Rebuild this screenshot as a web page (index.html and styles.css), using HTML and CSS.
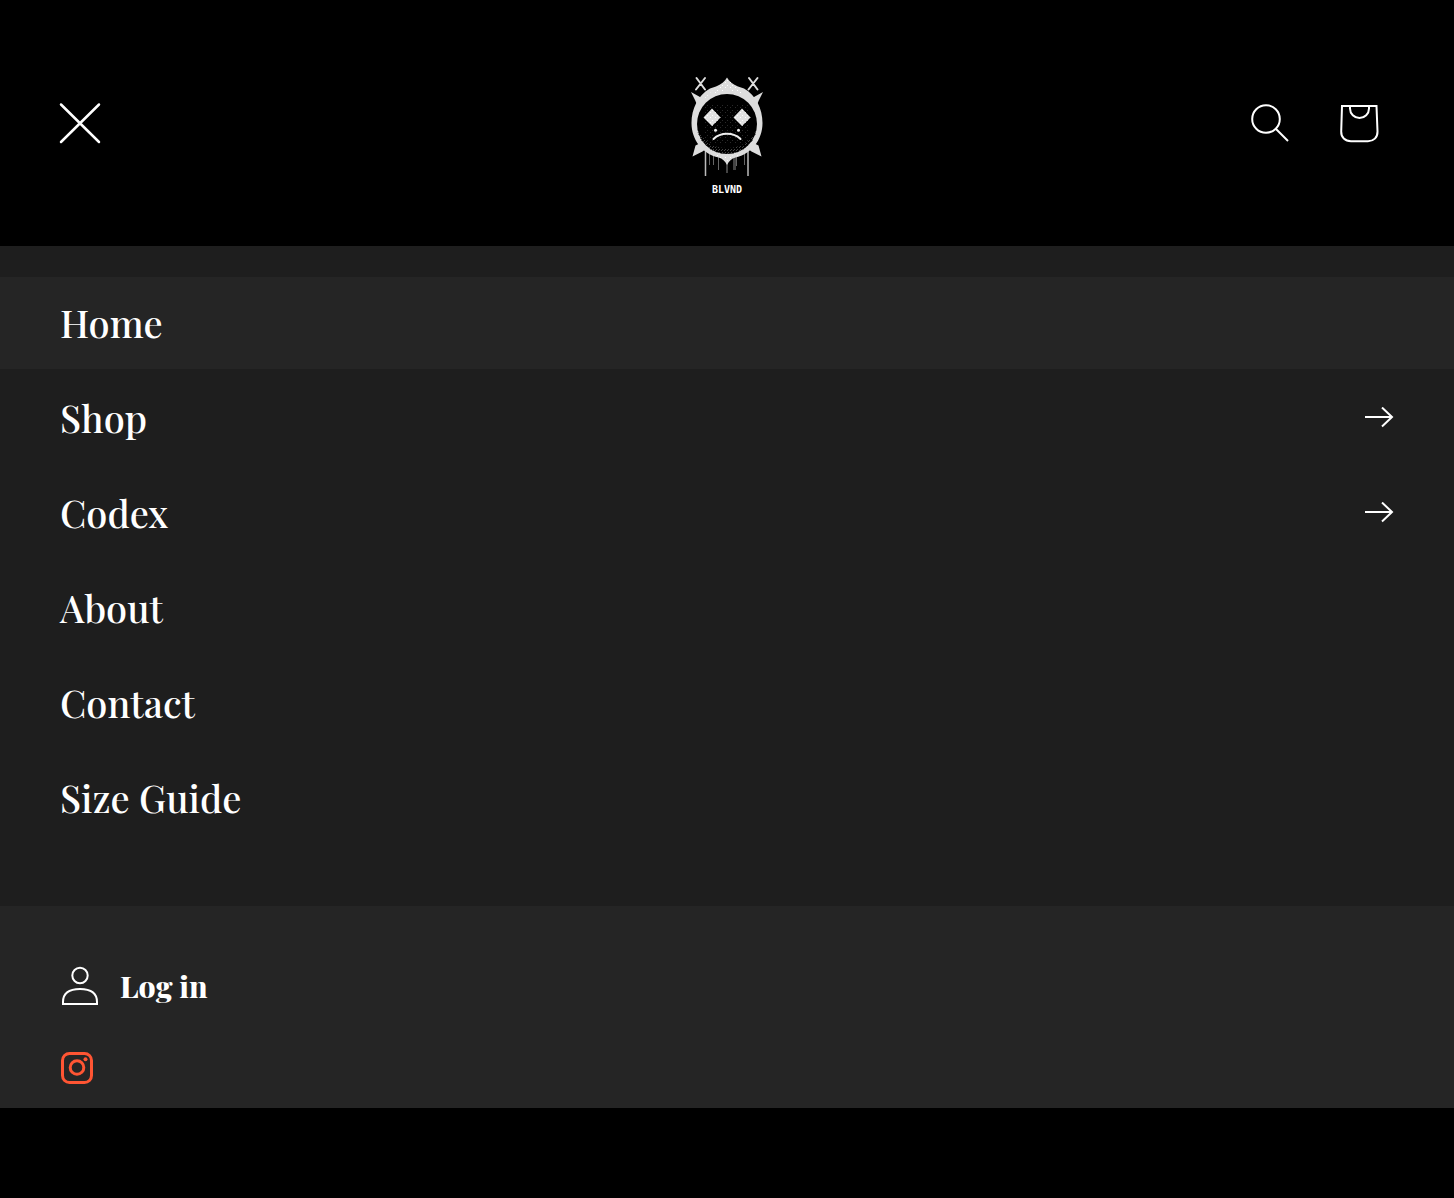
FILE: index.html
```
<!DOCTYPE html>
<html lang="en">
<head>
    <meta charset="UTF-8">
    <meta name="viewport" content="width=device-width, initial-scale=1.0">
    <title>BLVND</title>
    <link rel="stylesheet" href="styles.css">
</head>
<body>
    <header class="header">
        <button type="button" class="icon-button menu-toggle" aria-label="Close menu">
            <svg class="icon" width="44" height="44" viewBox="0 0 44 44"><path stroke-width="2.500" stroke-linecap="round" d="M3 3.500 41 41M41 3.500 3 41"/></svg>
        </button>

        <a href="#" class="logo" aria-label="BLVND home">
            <svg width="100" height="164" viewBox="0 -24 100 164">
                <defs>
                    <pattern id="dots" width="5" height="5" patternUnits="userSpaceOnUse">
                        <path fill="#fff" d="M0 0h1v1H0zM3 2h1v1H3z"/>
                    </pattern>
                    <pattern id="grain" width="3" height="3" patternUnits="userSpaceOnUse">
                        <path fill="#444" d="M0 0h1v1H0zM2 1h1v1H2z"/>
                    </pattern>
                    <pattern id="specks" width="5" height="5" patternUnits="userSpaceOnUse">
                        <path fill="#2a2a2a" d="M0 0h1v1H0zM3 2h1v1H3z"/>
                    </pattern>
                </defs>
                <!-- drips -->
                <path stroke="#bbb" stroke-width="1.500" d="M28.500 84v27M71 84v27"/>
                <path stroke="#666" d="M32.500 86v14M36.500 88v12M41.500 90v15M59.500 90v11M67.500 87v13"/>
                <path stroke="#888" d="M50 96v12"/>
                <path stroke="#444" stroke-width="3" d="M57.500 91v14"/>
                <!-- spikes -->
                <path fill="#ddd" d="M14 27l9 5 4 4-6 6-3-7zM86 27l-9 5-4 4 6 6 3-7zM15.500 91.500l3-11 6-3 5 6-4 3zM84.500 91.500l-3-11-6-3-5 6 4 3z"/>
                <!-- ring -->
                <path fill="#ddd" d="M50 12.500c2 4 6 7 11 9l6 2C79 30 85.500 44 85.500 58c0 17-11 31-27 34.500-4 1-6.500 3.500-8.500 7.500-2-4-4.500-6.500-8.500-7.500-16-3.500-27-17.500-27-34.500 0-14 6.500-28 18.500-34.500l6-2c5-2 9-5 11-9z"/>
                <path fill="url(#dots)" d="M50 14 40 22 24 36l10-7 16-4 16 4 10 7-16-14zM34 88l16 8 16-8-16 4z"/>
                <circle cx="50" cy="59" r="30"/>
                <path fill="url(#grain)" d="M20 64c2 14 14 25 30 25s28-11 30-25c-8 13-15 19-30 19S28 77 20 64z"/>
                <path fill="url(#specks)" d="M28 38h44v40H28z"/>
                <!-- face -->
                <path fill="#e2e2e2" d="m35 43.500 8.500 9L35 61l-8.500-8.500zM65 43.500l8.500 9L65 61l-8.500-8.500z"/>
                <path fill="url(#dots)" d="m35 43.500 8.500 9L35 61l-8.500-8.500zM65 43.500l8.500 9L65 61l-8.500-8.500z"/>
                <g fill="#eee"><circle cx="38.500" cy="65.300" r="1.500"/><circle cx="61.500" cy="65.300" r="1.500"/></g>
                <path fill="none" stroke="#eee" stroke-width="2" stroke-linecap="round" d="M36.500 74c7-7 20-7 27 0"/>
                <!-- crosses -->
                <path stroke="#ddd" stroke-width="2" stroke-linecap="round" d="m19.500 13 8.500 11.500M28 13l-9 11.500M72 13l8.500 11.500M80.500 13l-9 11.500"/>
                <text class="logo-name" x="50" y="128" text-anchor="middle">BLVND</text>
            </svg>
        </a>

        <div class="header-icons">
            <button type="button" class="icon-button" aria-label="Search">
                <svg class="icon" width="44" height="44" viewBox="0 0 44 44"><circle cx="16" cy="18" r="13.800"/><path d="m26 28 12 12"/></svg>
            </button>
            <a href="#" class="icon-button" aria-label="Cart">
                <svg class="icon" width="44" height="44" viewBox="0 0 44 44"><path d="M4 5h34.500l1 25.500c.2 6-4 9.700-9.500 9.700H13c-6 0-10-4-9.800-9.700zM12 5v2.500a9.500 9.500 0 0 0 19 0V5"/></svg>
            </a>
        </div>
    </header>

    <div class="drawer">
        <nav class="menu">
            <ul class="menu-list">
                <li><a href="#" class="menu-item active">Home</a></li>
                <li>
                    <a href="#" class="menu-item">Shop
                        <svg class="icon" width="30" height="22" viewBox="0 0 30 22"><path d="M1 10h27M18 .5l10 9.500-10 9.500"/></svg>
                    </a>
                </li>
                <li>
                    <a href="#" class="menu-item">Codex
                        <svg class="icon" width="30" height="22" viewBox="0 0 30 22"><path d="M1 10h27M18 .5l10 9.500-10 9.500"/></svg>
                    </a>
                </li>
                <li><a href="#" class="menu-item">About</a></li>
                <li><a href="#" class="menu-item">Contact</a></li>
                <li><a href="#" class="menu-item">Size Guide</a></li>
            </ul>
        </nav>

        <div class="utility">
            <a href="#" class="login">
                <svg class="icon" width="40" height="40" viewBox="0 0 40 40"><circle cx="20" cy="9.500" r="7.700"/><path d="M3 38v-2c0-8 5-13 17-13s17 5 17 13v2z"/></svg>
                Log in
            </a>
            <a href="#" class="social" aria-label="Instagram">
                <svg class="icon" width="34" height="34" viewBox="0 0 34 34"><rect x="2.500" y="2.500" width="29" height="29" rx="7"/><circle cx="17" cy="16.500" r="6.800"/><circle class="dot" cx="25.500" cy="8.300" r="2"/></svg>
            </a>
        </div>
    </div>
</body>
</html>
```
FILE: styles.css
```
body {
    margin: 0;
    background-color: #000;
    color: #fff;
    font-family: "Playfair Display", "Liberation Serif", serif;
}
a {
    color: inherit;
    text-decoration: none;
}
svg {
    display: block;
}
.icon {
    flex: none;
    fill: none;
    stroke: currentColor;
    stroke-width: 2;
}
.header {
    display: grid;
    grid-template-columns: 1fr auto 1fr;
    align-items: center;
    padding: 41px 50px;
}
.icon-button {
    display: flex;
    align-items: center;
    justify-content: center;
    width: 88px;
    height: 88px;
    padding: 0;
    border: none;
    background: none;
    color: #fff;
    cursor: pointer;
}
.menu-toggle {
    width: 60px;
}
.header-icons {
    display: flex;
    justify-content: flex-end;
}
.logo-name {
    fill: #fff;
    font: bold 10px "DejaVu Sans Mono", monospace;
}
.drawer {
    background-color: #1e1e1e;
}
.menu {
    padding: 31px 0 62px;
}
.menu-list {
    display: flex;
    flex-direction: column;
    gap: 3px;
    margin: 0;
    padding: 0;
    list-style: none;
}
.menu-item {
    display: flex;
    align-items: center;
    justify-content: space-between;
    padding: 22px 60px;
    font-size: 38px;
    font-weight: 500;
    line-height: 48px;
}
.menu-item.active,
.menu-item:hover {
    background-color: #252525;
}
.utility {
    display: flex;
    flex-direction: column;
    align-items: flex-start;
    gap: 45px;
    padding: 60px 60px 23px;
    background-color: #252525;
}
.login {
    display: flex;
    align-items: center;
    gap: 20px;
    font-size: 30px;
    font-weight: 800;
    line-height: 40px;
}
.social {
    color: #ff5533;
}
.social .icon {
    stroke-width: 3;
}
.social .dot {
    fill: currentColor;
    stroke: none;
}
```
